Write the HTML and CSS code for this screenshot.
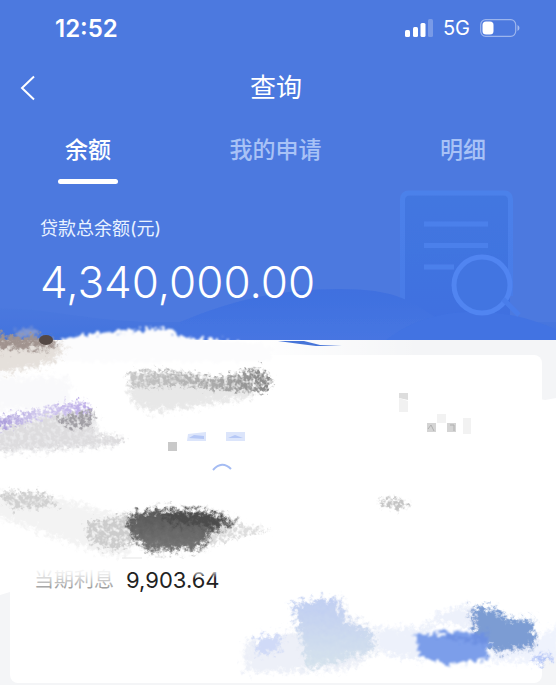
FILE: index.html
```html
<!DOCTYPE html>
<html lang="zh-CN">
<head>
<meta charset="utf-8">
<meta name="viewport" content="width=device-width, initial-scale=1">
<title>查询</title>
<link rel="stylesheet" href="styles.css">
</head>
<body>
<header class="hero">
  <svg class="hero-art" viewBox="0 0 556 160" aria-hidden="true">
    <defs>
      <linearGradient id="sheet" x1="0" y1="0" x2="0" y2="1"><stop offset="0" stop-color="#4377e0"/><stop offset="1" stop-color="#3e6fe0"/></linearGradient>
      <linearGradient id="rim" x1="0" y1="0" x2="0" y2="1"><stop offset="0" stop-color="#4c81ea"/><stop offset="1" stop-color="#487ae7"/></linearGradient>
      <linearGradient id="hill" x1="0" y1="0" x2="0" y2="1"><stop offset="0" stop-color="#3f70df"/><stop offset="1" stop-color="#4776e2"/></linearGradient>
      <linearGradient id="base" x1="0" y1="0" x2="0" y2="1"><stop offset="0" stop-color="#4b78de"/><stop offset="1" stop-color="#4072de"/></linearGradient>
      <filter id="soft"><feGaussianBlur stdDeviation="0.6"/></filter>
    </defs>
    <g filter="url(#soft)">
      <path d="M-5 128C50 128 80 140 150 142H560V165H-5z" fill="url(#base)"/>
      <path d="M402 162V20q0-7 7-7h94q7 0 7 7v142z" fill="url(#sheet)"/>
      <path d="M402.500 145V20q0-7 7-7h94q7 0 7 7v96" fill="none" stroke="url(#rim)" stroke-width="5"/>
      <path d="M424 44h64M424 65.500h64M424 87h30" stroke="#4c80eb" stroke-width="5"/>
      <path d="M180 142C235 118 285 109 340 109S410 120 438 139V165H180z" fill="url(#hill)"/>
      <path d="M380 165C410 138 450 130 484 132S536 141 560 151V165z" fill="#4273e2"/>
      <circle cx="482" cy="105" r="28" fill="#4375e1" stroke="#5185f1" stroke-width="5"/>
      <path d="M503 119l16 16" stroke="#4a7dea" stroke-width="5"/>
    </g>
  </svg>
  <div class="status">
    <span class="time">12:52</span>
    <div class="signals">
      <svg class="bars" viewBox="0 0 28 18" aria-hidden="true"><rect y="11" width="5" height="7" rx="1.500"/><rect x="8" y="8" width="5" height="10" rx="1.500"/><rect x="15.500" y="4" width="5" height="14" rx="1.500"/><rect x="23" width="5" height="18" rx="1.500" opacity=".25"/></svg>
      <span class="network">5G</span>
      <svg class="battery" viewBox="0 0 40 18" aria-hidden="true"><rect x=".7" y=".7" width="35" height="16.600" rx="5" fill="none" stroke="#fff" stroke-opacity=".45" stroke-width="1.200"/><rect x="2.500" y="2.500" width="11" height="13" rx="3.500"/><path d="M37.500 6q2 1 2 3t-2 3z" opacity=".5"/></svg>
    </div>
  </div>
  <div class="navbar">
    <button class="back" type="button" aria-label="返回"><svg viewBox="0 0 16 26" aria-hidden="true"><path d="M14 1.500L2 13l12 11.500"/></svg></button>
    <h1>查询</h1>
  </div>
  <nav class="tabs">
    <a class="tab active" href="#balance" aria-current="page">余额</a>
    <a class="tab" href="#requests">我的申请</a>
    <a class="tab" href="#details">明细</a>
  </nav>
  <section class="balance" id="balance">
    <p class="label">贷款总余额(元)</p>
    <p class="amount">4,340,000.00</p>
  </section>
</header>
<main>
  <section class="card">
    <dl class="row"><dt>当期利息</dt><dd>9,903.64</dd></dl>
  </section>
  <svg class="paint" viewBox="0 0 556 365" aria-hidden="true">
    <defs>
      <filter id="rough" x="-10%" y="-20%" width="120%" height="140%"><feTurbulence type="fractalNoise" baseFrequency=".22" numOctaves="3" seed="4" result="n"/><feDisplacementMap in="SourceGraphic" in2="n" scale="14" xChannelSelector="R" yChannelSelector="G"/><feGaussianBlur stdDeviation="1"/></filter>
      <filter id="wash" x="-10%" y="-20%" width="120%" height="140%"><feTurbulence type="fractalNoise" baseFrequency=".2" numOctaves="3" seed="4" result="n"/><feGaussianBlur in="SourceGraphic" stdDeviation="2" result="b"/><feDisplacementMap in="b" in2="n" scale="18" xChannelSelector="R" yChannelSelector="G"/><feGaussianBlur stdDeviation=".7"/></filter>
      <filter id="grain" x="-15%" y="-25%" width="130%" height="150%"><feTurbulence type="fractalNoise" baseFrequency=".25" numOctaves="3" seed="9" result="n"/><feGaussianBlur in="SourceGraphic" stdDeviation="1" result="b"/><feDisplacementMap in="b" in2="n" scale="16" xChannelSelector="R" yChannelSelector="G" result="d"/><feColorMatrix in="n" values="0 0 0 0 0  0 0 0 0 0  0 0 0 0 0  0 0 0 3 -.700" result="m"/><feComposite in="d" in2="m" operator="in"/><feGaussianBlur stdDeviation=".7"/></filter>
      <linearGradient id="smudge"><stop offset="0" stop-color="#c8c8c8"/><stop offset=".6" stop-color="#aaa"/><stop offset="1" stop-color="#858585"/></linearGradient>
      <linearGradient id="violet"><stop offset="0" stop-color="#a394d8"/><stop offset=".5" stop-color="#d4cdee"/><stop offset="1" stop-color="#b7a5e6"/></linearGradient>
      <linearGradient id="mist" x1="0" y1="0" x2="0" y2="1"><stop offset="0" stop-color="#bfcdf2"/><stop offset="1" stop-color="#d7e4ec"/></linearGradient>
      <linearGradient id="coal" x1="0" y1="0" x2="0" y2="1"><stop offset="0" stop-color="#555"/><stop offset="1" stop-color="#777"/></linearGradient>
      <linearGradient id="veil" x1="0" y1="0" x2="0" y2="1"><stop offset="0" stop-color="#fff"/><stop offset=".3" stop-color="#fff" stop-opacity=".8"/><stop offset="1" stop-color="#fff" stop-opacity="0"/></linearGradient>
      <linearGradient id="fade"><stop offset=".6" stop-color="#fff"/><stop offset="1" stop-color="#fff" stop-opacity="0"/></linearGradient>
    </defs>
    <path d="M0 20H420V35H0z" fill="url(#fade)"/>
    <path d="M0 20H20V262L10 272L0 275zM535 78L545 80L556 78V330L545 336L535 335z" fill="#fff"/>
    <g filter="url(#rough)">
      <path d="M50 24Q85 11 125 11L165 8Q182 20 215 19L270 26V42H50z" fill="#fcfcfd"/>
      <path d="M15 10L32 8L40 19L16 17z" fill="#8197d0"/>
    </g>
    <g filter="url(#wash)">
      <path d="M-10 16L38 17L66 28L54 42Q30 50-10 54z" fill="#e5e0db"/>
      <path d="M-10 15L38 17L60 22L52 28L-10 29z" fill="#a0938e"/>
      <path d="M-10 57H70V90H-10z" fill="#f9f9fb"/>
    </g>
    <ellipse cx="46" cy="20" rx="7" ry="5" fill="#544844"/>
    <path d="M278 21L304 21L320 25L342 26L316 26L300 24z" fill="#4775d8"/>
    <path d="M-10 112L58 94L95 94L98 116L125 118L110 126L-10 133z" fill="#eaeaec" filter="url(#wash)"/>
    <path d="M-10 172L50 176L100 190L136 199L128 236L94 231L20 204L-10 196z" fill="#f3f3f3" filter="url(#wash)"/>
    <path d="M130 54L172 53L240 62L264 64L250 77L194 87L150 92L130 80z" fill="#e8e8e8" filter="url(#wash)"/>
    <g filter="url(#grain)">
      <path d="M-10 100Q35 88 86 81L93 93L55 101L-10 114z" fill="url(#violet)"/>
      <path d="M-10 113L58 94L92 91L94 114L126 118L122 124L-10 131z" fill="#dddcde"/>
      <path d="M60 96L94 90L93 104L72 109L58 102z" fill="#a19fa5"/>
      <path d="M128 52L168 50L216 58L258 47L273 60L267 72L232 71L180 66L130 68z" fill="url(#smudge)"/>
      <path d="M-10 171L45 173L60 186L15 189z" fill="#d0d0d0"/>
      <path d="M85 203L130 194L138 222L110 232L87 219z" fill="#ccc"/>
      <path d="M195 197L235 204L272 210L230 219L205 229z" fill="#ddd"/>
      <path d="M380 179L397 178L410 184L400 190L380 185z" fill="#c4c4c4"/>
    </g>
    <g filter="url(#wash)">
      <path d="M128 195L160 189L210 192L238 202L211 212L202 229L148 231L130 214z" fill="url(#coal)"/>
      <path d="M160 192L207 194L235 203L208 207L170 202z" fill="#4b4b4b"/>
      <path d="M245 322L268 315L298 311L292 288L320 278L340 278L350 297L374 308L378 330L350 349L304 352L245 352z" fill="#edf0f8"/>
      <path d="M256 318L282 314L280 330L256 336z" fill="#d0daf7"/>
      <path d="M292 284L336 278L347 302L374 312L372 332L308 349L299 313z" fill="url(#mist)"/>
      <path d="M376 308L420 308L440 292L470 285L490 310L434 302L420 340L380 333z" fill="#edf1fb"/>
      <path d="M488 333L532 323L560 303V338L490 343z" fill="#eff3fd"/>
      <path d="M472 288L492 288L509 299L533 300L535 327L496 332L475 323z" fill="#7c9cd3"/>
      <path d="M533 338L551 334L550 341L534 343z" fill="#a5baf5"/>
    </g>
    <g filter="url(#rough)">
      <path d="M416 315L469 311L489 319L488 339L447 345L419 336z" fill="#7c9eea"/>
      <path d="M428 315L468 317L488 310L487 325L465 321z" fill="#6d90e2"/>
    </g>
    <path d="M27 248H120V272H27z" fill="url(#veil)"/>
    <path d="M188 248H222V258H188z" fill="url(#veil)"/>
    <path d="M122 238H142M155 237H163" stroke="#e5e5e5"/>
    <path d="M399 73h9v7l-9-2z" fill="#ddd"/><path d="M399 78l9 3v11h-9z" fill="#f1f1f1"/>
    <path d="M427 103h9v9h-9zM447 103h9v9h-9z" fill="#d4d4d4"/><path d="M437 94h9v9h-9zM463 98h8v16h-8z" fill="#f2f2f2"/><path d="M428 109l3-4 3 6M450 105h4v6" fill="none" stroke="#b0b0b0"/>
    <path d="M168 122h9v9h-9z" fill="#c9c9c9"/><path d="M188 114l18-2v9h-19zM226 112h19v9h-19z" fill="#dce5fb"/><path d="M189 118l5-3 10 1v3zM228 118l7-3 8 3" fill="#b6c8f6"/>
    <path d="M213 150Q222 140 231 149" fill="none" stroke="#a5bcf3" stroke-width="2"/>
  </svg>
</main>
</body>
</html>
```
FILE: styles.css
```css
* { box-sizing: border-box; }
body {
  margin: 0;
  background: #f4f5f7;
  font-family: Inter, "Noto Sans CJK SC", sans-serif;
}
h1, p, dl, dd { margin: 0; }
.hero {
  position: relative;
  height: 340px;
  overflow: hidden;
  background: #4c79df;
  color: #fff;
}
.hero-art {
  position: absolute;
  left: 0;
  bottom: 0;
  width: 100%;
}
.status {
  position: relative;
  display: flex;
  align-items: center;
  justify-content: space-between;
  height: 56px;
  padding: 0 36px 0 55px;
}
.time { font-size: 24px; font-weight: 600; }
.signals { display: flex; align-items: center; gap: 10px; }
.signals svg { fill: #fff; height: 18px; }
.bars { width: 28px; }
.battery { width: 40px; }
.network { font-size: 20px; }
.navbar {
  position: relative;
  display: grid;
  grid-template-columns: 56px 1fr 56px;
  align-items: center;
  height: 64px;
  padding-right: 4px;
}
.back {
  display: flex;
  padding: 0 20px;
  border: 0;
  background: none;
}
.back svg {
  width: 16px;
  height: 26px;
  fill: none;
  stroke: #fff;
  stroke-width: 2;
}
h1 {
  font-size: 26px;
  font-weight: 400;
  line-height: 38px;
  text-align: center;
}
.tabs {
  position: relative;
  display: flex;
  justify-content: space-between;
  height: 64px;
  padding: 12px 63px 0 58px;
}
.tab {
  display: flex;
  flex-direction: column;
  align-items: center;
  justify-content: space-between;
  min-width: 60px;
  color: #a8c2f6;
  font-size: 23px;
  font-weight: 500;
  line-height: 36px;
  text-decoration: none;
}
.tab.active { color: #fff; }
.tab.active::after {
  content: "";
  width: 60px;
  height: 5px;
  border-radius: 3px;
  background: #fff;
}
.balance { position: relative; padding: 30px 40px 0; }
.label { color: #e8f2ff; font-size: 18px; line-height: 30px; }
.amount { font-size: 44px; font-weight: 300; line-height: 56px; padding-top: 10px; }
main { position: relative; padding: 15px 14px 2px 10px; }
.card {
  padding: 210px 24px 88px;
  border-radius: 8px;
  background: #fff;
}
.row { display: flex; gap: 12px; line-height: 30px; }
.row dt { color: #888; font-size: 20px; }
.row dd { color: #222; font-size: 22px; }
.paint {
  position: absolute;
  top: -20px;
  left: 0;
  width: 100%;
  pointer-events: none;
}
```
